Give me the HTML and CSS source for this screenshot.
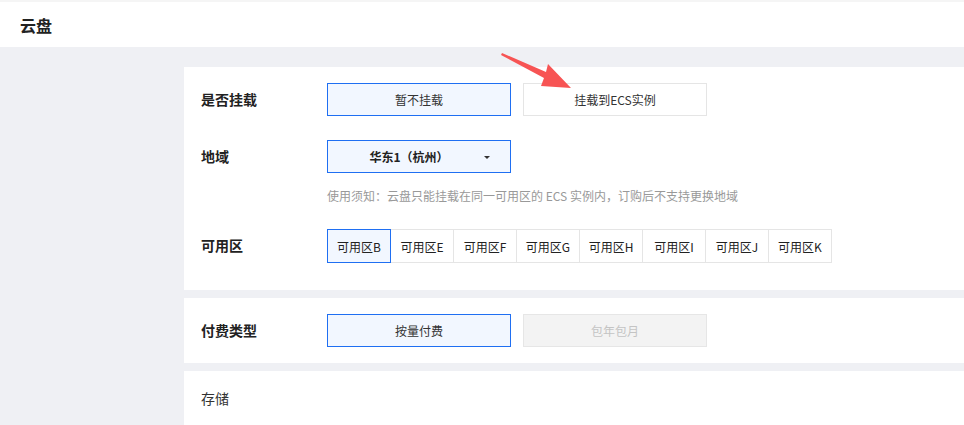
FILE: index.html
```html
<!DOCTYPE html>
<html lang="zh-CN">
<head>
    <meta charset="UTF-8">
    <title>云盘</title>
    <link rel="stylesheet" href="styles.css">
</head>
<body>
    <div class="page-header">
        <h1>云盘</h1>
    </div>

    <div class="content">
        <div class="card">
            <div class="form-row">
                <div class="form-label">是否挂载</div>
                <div class="form-field">
                    <button class="btn-option selected">暂不挂载</button>
                    <button class="btn-option">挂载到ECS实例</button>
                </div>
            </div>

            <div class="form-row">
                <div class="form-label">地域</div>
                <div class="form-field">
                    <div class="select">华东1（杭州）<span class="caret"></span></div>
                </div>
            </div>
            <div class="form-note">使用须知：云盘只能挂载在同一可用区的 ECS 实例内，订购后不支持更换地域</div>

            <div class="form-row">
                <div class="form-label">可用区</div>
                <div class="form-field zones">
                    <button class="zone selected">可用区B</button>
                    <button class="zone">可用区E</button>
                    <button class="zone">可用区F</button>
                    <button class="zone">可用区G</button>
                    <button class="zone">可用区H</button>
                    <button class="zone">可用区I</button>
                    <button class="zone">可用区J</button>
                    <button class="zone">可用区K</button>
                </div>
            </div>
        </div>

        <div class="card card-small">
            <div class="form-row">
                <div class="form-label">付费类型</div>
                <div class="form-field">
                    <button class="btn-option selected">按量付费</button>
                    <button class="btn-option disabled">包年包月</button>
                </div>
            </div>
        </div>

        <div class="card card-section">
            <div class="section-title">存储</div>
        </div>
    </div>

    <!-- 标注箭头 -->
    <svg class="pointer" width="76" height="42" viewBox="0 0 76 42">
        <polygon points="2,2 46,21 48,13 71,37 41,35 44,27 1,4" fill="#f75454"/>
    </svg>
</body>
</html>
```

FILE: styles.css
```css
* {
    margin: 0;
    padding: 0;
    box-sizing: border-box;
}

body {
    font-family: "Noto Sans CJK SC", "Noto Sans", sans-serif;
    background: #eff0f4;
    color: #333;
    font-size: 12px;
    overflow: hidden;
}

.page-header {
    background: #fff;
    height: 47px;
    border-top: 2px solid #f5f5f5;
    padding-left: 20px;
    display: flex;
    align-items: center;
}

.page-header h1 {
    font-size: 16px;
    font-weight: 700;
    color: #222;
}

.content {
    padding: 20px 0 0 184px;
}

.card {
    background: #fff;
    padding: 16px 17px 27px;
    margin-bottom: 8px;
}

.card-small {
    padding: 16px 17px;
}

.card-section {
    padding: 17px 17px 20px;
}

.form-row {
    display: flex;
    align-items: center;
    margin-bottom: 24px;
}

.form-row:last-child {
    margin-bottom: 0;
}

.form-label {
    width: 126px;
    font-size: 14px;
    line-height: 18px;
    padding-bottom: 2px;
    font-weight: 700;
    color: #222;
}

.form-field {
    display: flex;
    gap: 12px;
}

.btn-option {
    width: 184px;
    height: 33px;
    font-family: inherit;
    font-size: 12px;
    color: #333;
    background: #fff;
    border: 1px solid #e5e5e5;
    cursor: pointer;
}

.btn-option.selected {
    background: #f2f7ff;
    border-color: #1f6ff2;
}

.btn-option.disabled {
    background: #f3f3f3;
    border-color: #e6e6e6;
    color: #c4c4c4;
    cursor: not-allowed;
}

.select {
    position: relative;
    width: 184px;
    height: 33px;
    padding-right: 20px;
    display: flex;
    align-items: center;
    justify-content: center;
    font-weight: 700;
    color: #222;
    background: #f2f7ff;
    border: 1px solid #1f6ff2;
}

.caret {
    position: absolute;
    right: 20px;
    top: 15px;
    border-left: 3px solid transparent;
    border-right: 3px solid transparent;
    border-top: 3px solid #333;
}

.form-note {
    margin: -10px 0 24px 126px;
    line-height: 18px;
    color: #999;
}

.zones {
    gap: 0;
}

.zone {
    width: 64px;
    height: 34px;
    margin-left: -1px;
    font-family: inherit;
    font-size: 12px;
    color: #222;
    background: #fff;
    border: 1px solid #e5e5e5;
    cursor: pointer;
}

.zone:first-child {
    margin-left: 0;
}

.zone.selected {
    position: relative;
    z-index: 1;
    background: #f2f7ff;
    border-color: #1f6ff2;
}

.section-title {
    font-size: 14px;
    line-height: 20px;
    color: #333;
    height: 40px;
}

.pointer {
    position: absolute;
    left: 500px;
    top: 51px;
}
```
